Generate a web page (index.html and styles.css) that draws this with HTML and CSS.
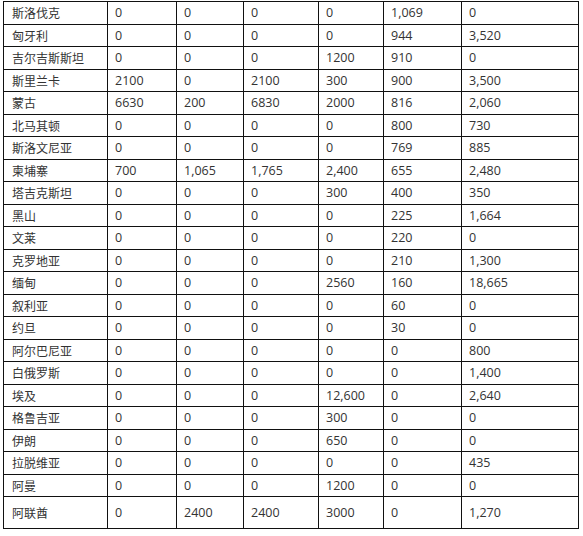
FILE: index.html
```html
<!DOCTYPE html>
<html lang="zh-CN">
<head>
<meta charset="utf-8">
<title>表格</title>
<link rel="stylesheet" href="styles.css">
</head>
<body>
<table class="data">
<colgroup>
<col class="c1"><col class="c2"><col class="c3"><col class="c4"><col class="c5"><col class="c6"><col class="c7">
</colgroup>
<tbody>
<tr><td class="name">斯洛伐克</td><td>0</td><td>0</td><td>0</td><td>0</td><td>1,069</td><td>0</td></tr>
<tr><td class="name">匈牙利</td><td>0</td><td>0</td><td>0</td><td>0</td><td>944</td><td>3,520</td></tr>
<tr><td class="name">吉尔吉斯斯坦</td><td>0</td><td>0</td><td>0</td><td>1200</td><td>910</td><td>0</td></tr>
<tr><td class="name">斯里兰卡</td><td>2100</td><td>0</td><td>2100</td><td>300</td><td>900</td><td>3,500</td></tr>
<tr><td class="name">蒙古</td><td>6630</td><td>200</td><td>6830</td><td>2000</td><td>816</td><td>2,060</td></tr>
<tr><td class="name">北马其顿</td><td>0</td><td>0</td><td>0</td><td>0</td><td>800</td><td>730</td></tr>
<tr><td class="name">斯洛文尼亚</td><td>0</td><td>0</td><td>0</td><td>0</td><td>769</td><td>885</td></tr>
<tr><td class="name">柬埔寨</td><td>700</td><td>1,065</td><td>1,765</td><td>2,400</td><td>655</td><td>2,480</td></tr>
<tr><td class="name">塔吉克斯坦</td><td>0</td><td>0</td><td>0</td><td>300</td><td>400</td><td>350</td></tr>
<tr><td class="name">黑山</td><td>0</td><td>0</td><td>0</td><td>0</td><td>225</td><td>1,664</td></tr>
<tr><td class="name">文莱</td><td>0</td><td>0</td><td>0</td><td>0</td><td>220</td><td>0</td></tr>
<tr><td class="name">克罗地亚</td><td>0</td><td>0</td><td>0</td><td>0</td><td>210</td><td>1,300</td></tr>
<tr><td class="name">缅甸</td><td>0</td><td>0</td><td>0</td><td>2560</td><td>160</td><td>18,665</td></tr>
<tr><td class="name">叙利亚</td><td>0</td><td>0</td><td>0</td><td>0</td><td>60</td><td>0</td></tr>
<tr><td class="name">约旦</td><td>0</td><td>0</td><td>0</td><td>0</td><td>30</td><td>0</td></tr>
<tr><td class="name">阿尔巴尼亚</td><td>0</td><td>0</td><td>0</td><td>0</td><td>0</td><td>800</td></tr>
<tr><td class="name">白俄罗斯</td><td>0</td><td>0</td><td>0</td><td>0</td><td>0</td><td>1,400</td></tr>
<tr><td class="name">埃及</td><td>0</td><td>0</td><td>0</td><td>12,600</td><td>0</td><td>2,640</td></tr>
<tr><td class="name">格鲁吉亚</td><td>0</td><td>0</td><td>0</td><td>300</td><td>0</td><td>0</td></tr>
<tr><td class="name">伊朗</td><td>0</td><td>0</td><td>0</td><td>650</td><td>0</td><td>0</td></tr>
<tr><td class="name">拉脱维亚</td><td>0</td><td>0</td><td>0</td><td>0</td><td>0</td><td>435</td></tr>
<tr><td class="name">阿曼</td><td>0</td><td>0</td><td>0</td><td>1200</td><td>0</td><td>0</td></tr>
<tr class="last"><td class="name">阿联酋</td><td>0</td><td>2400</td><td>2400</td><td>3000</td><td>0</td><td>1,270</td></tr>
</tbody>
</table>
</body>
</html>
```

FILE: styles.css
```css
html, body {
  margin: 0;
  padding: 0;
  background: #ffffff;
}

.data {
  border-collapse: collapse;
  table-layout: fixed;
  width: 576px;
  margin: 1px 0 0 3px;
  font-family: "Open Sans", "Noto Sans CJK SC", sans-serif;
  font-size: 12.5px;
  color: #333333;
}

.c1 { width: 104px; }
.c2 { width: 69px; }
.c3 { width: 67px; }
.c4 { width: 75px; }
.c5 { width: 65px; }
.c6 { width: 78px; }
.c7 { width: 117px; }

.data tr {
  height: 22.5px;
}

.data tr.last {
  height: 32px;
}

.data td {
  border: 1px solid #111111;
  padding: 0 7px;
  text-align: left;
  vertical-align: middle;
  white-space: nowrap;
  line-height: 15px;
}

.data td.name {
  font-family: "Noto Sans CJK SC", sans-serif;
  font-size: 12px;
  padding-left: 8px;
}
```
